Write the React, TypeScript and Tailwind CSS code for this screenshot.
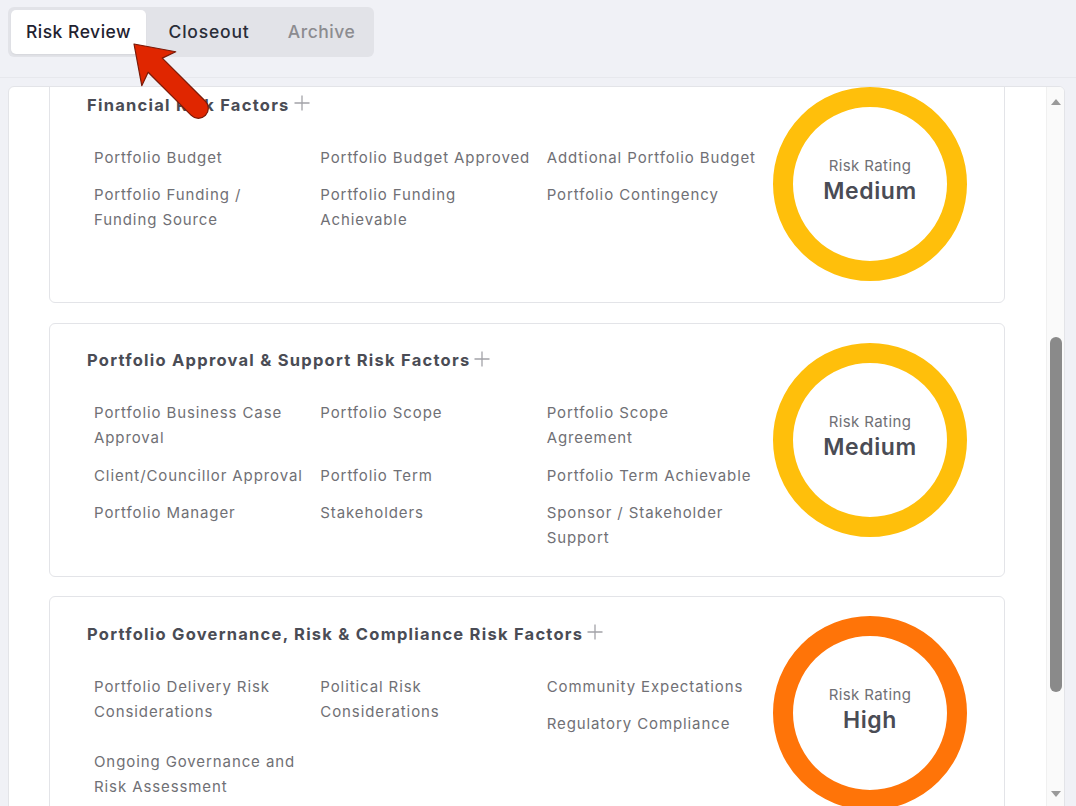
import React from "react";

type Card = {
  title: string;
  rating: string;
  color: string;
  items: string[][];
};

const cards: Card[] = [
  {
    title: "Financial Risk Factors",
    rating: "Medium",
    color: "border-[#ffbf0b]",
    items: [
      ["Portfolio Budget"],
      ["Portfolio Budget Approved"],
      ["Addtional Portfolio Budget"],
      ["Portfolio Funding /", "Funding Source"],
      ["Portfolio Funding", "Achievable"],
      ["Portfolio Contingency"],
    ],
  },
  {
    title: "Portfolio Approval & Support Risk Factors",
    rating: "Medium",
    color: "border-[#ffbf0b]",
    items: [
      ["Portfolio Business Case", "Approval"],
      ["Portfolio Scope"],
      ["Portfolio Scope", "Agreement"],
      ["Client/Councillor Approval"],
      ["Portfolio Term"],
      ["Portfolio Term Achievable"],
      ["Portfolio Manager"],
      ["Stakeholders"],
      ["Sponsor / Stakeholder", "Support"],
    ],
  },
  {
    title: "Portfolio Governance, Risk & Compliance Risk Factors",
    rating: "High",
    color: "border-[#ff7408]",
    items: [
      ["Portfolio Delivery Risk", "Considerations"],
      ["Political Risk", "Considerations"],
      ["Community Expectations"],
      ["Regulatory Compliance"],
      ["Ongoing Governance and", "Risk Assessment"],
    ],
  },
];

function Plus() {
  return (
    <svg width="18" height="18" viewBox="0 0 18 18" className="ml-[3px] -mt-[4px] shrink-0">
      <path d="M9 1.5V16.5M1.5 9H16.5" stroke="#a3a3a8" strokeWidth="1.3" />
    </svg>
  );
}

function RiskCard({ card, first }: { card: Card; first?: boolean }) {
  return (
    <div
      className={`flex rounded-md border border-[#e3e4e8] bg-white px-[37px] pt-[19px] pb-[13px] ${
        first ? "-mt-[20px]" : ""
      }`}
    >
      <div className="flex-1 min-w-0">
        <div className="mt-[6px] flex items-center h-[24px]">
          <span className="text-[16.5px] font-bold text-[#4a4c55] tracking-[1.25px] whitespace-nowrap">
            {card.title}
          </span>
          <Plus />
        </div>
        <div className="mt-[27.5px] pl-[7px] flow-root">
          {card.items.map((lines, i) => (
            <div
              key={i}
              className="float-left w-1/3 mb-[12.5px] text-[15px] leading-[25px] tracking-[0.9px] text-[#707075]"
            >
              {lines.map((l, j) => (
                <div key={j} className="whitespace-nowrap">
                  {l}
                </div>
              ))}
            </div>
          ))}
        </div>
      </div>
      <div className="mb-[8px] shrink-0">
        <div
          className={`w-[194px] h-[194px] rounded-full border-[20px] ${card.color} flex flex-col items-center justify-center`}
        >
          <div className="text-[15px] leading-[20px] tracking-[0.4px] text-[#707075] -mt-[6px]">Risk Rating</div>
          <div className="text-[23px] leading-[30px] tracking-[0.6px] font-semibold text-[#4a4c55]">
            {card.rating}
          </div>
        </div>
      </div>
    </div>
  );
}

export default function App() {
  return (
    <div
      className="relative h-[806px] w-[1076px] overflow-hidden bg-[#f0f1f6]"
      style={{ fontFamily: "Inter, 'Noto Sans', sans-serif" }}
    >
      <div className="h-[78px] border-b border-[#e7e8ed] px-[8px] pt-[7px]">
        <div className="inline-flex rounded-md bg-[#e2e3e8] p-[3px]">
          <div className="flex h-[44px] w-[135px] items-center justify-center rounded-[5px] bg-white text-[17.5px] tracking-[0.5px] font-medium text-[#1f2230] shadow-[0_1px_2px_rgba(0,0,0,0.06)]">
            Risk Review
          </div>
          <div className="flex h-[44px] w-[126px] items-center justify-center text-[17.5px] tracking-[0.8px] font-medium text-[#2a2d38]">
            Closeout
          </div>
          <div className="flex h-[44px] w-[99px] items-center justify-center text-[17.5px] tracking-[0.5px] font-medium text-[#8c8c90]">
            Archive
          </div>
        </div>
      </div>

      <div className="ml-[8px] mt-[8px] flex h-[730px] w-[1057px] overflow-hidden rounded-md border border-[#e3e4e8] bg-white">
        <div className="flex-1 overflow-hidden pl-[40px] pr-[41px]">
          <div className="flex flex-col gap-[19.5px]">
            {cards.map((c, i) => (
              <RiskCard key={i} card={c} first={i === 0} />
            ))}
          </div>
        </div>
        <div className="flex w-[18px] flex-col items-center bg-[#fafafa] border-l border-[#f0f0f0]">
          <svg width="10" height="6" viewBox="0 0 10 6" className="mt-[12px]">
            <path d="M0 6L5 0L10 6Z" fill="#9a9a9a" />
          </svg>
          <div className="mt-[232px] h-[355px] w-[12px] rounded-full bg-[#8a8a8a]" />
          <svg width="10" height="6" viewBox="0 0 10 6" className="mt-[99px]">
            <path d="M0 0L5 6L10 0Z" fill="#9a9a9a" />
          </svg>
        </div>
      </div>

      <svg className="pointer-events-none absolute left-0 top-0" width="1076" height="806">
        <g transform="translate(134 44) rotate(45)">
          <path
            d="M0 0 L35 -24 L30 -10 L91 -10 A10 10 0 0 1 91 10 L30 10 L35 24 Z"
            fill="#e02600"
            stroke="#7a1a08"
            strokeWidth="1.2"
            strokeLinejoin="round"
          />
        </g>
      </svg>
    </div>
  );
}
